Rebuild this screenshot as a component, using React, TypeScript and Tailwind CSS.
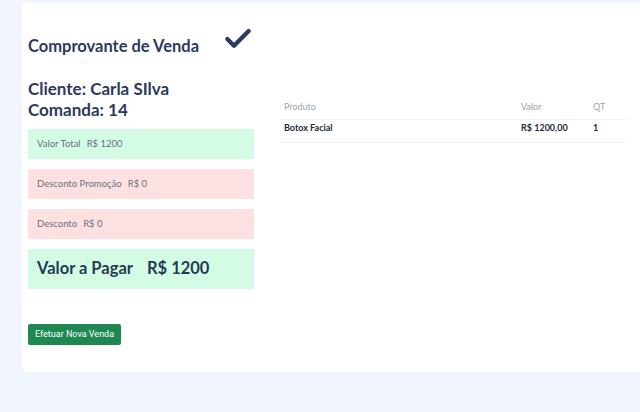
import { Check } from "lucide-react";

const font = { fontFamily: "Lato, 'Noto Sans', sans-serif" };

export default function App() {
    return (
        <div className="min-h-[412px] w-[640px] bg-[#f1f6fe] pt-[3px] pl-[22px]" style={font}>
            <div className="flex h-[369px] rounded-bl-md bg-white">
                <div className="flex w-[232px] flex-col pl-[6px] pt-[22px]">
                    <div className="flex items-start justify-between">
                        <h1 className="pt-[9px] pb-[2px] text-[16.5px] font-bold text-[#2d3a5e]">Comprovante de Venda</h1>
                        <Check className="-mt-[2px] h-[32px] w-[32px] text-[#2d3a5e]" strokeWidth={3.2} />
                    </div>
                    <div className="mt-[17px] text-[17px] font-bold leading-[21px] text-[#2d3a5e]">
                        <p>Cliente: Carla SIlva</p>
                        <p>Comanda: 14</p>
                    </div>
                    <div className="mt-[9px] flex flex-col gap-[10px] text-[9.5px] text-[#6b7280]">
                        <div className="flex h-[30px] items-center gap-[6px] bg-[#d4fce5] px-[9px]">
                            <span>Valor Total</span>
                            <span>R$ 1200</span>
                        </div>
                        <div className="flex h-[30px] items-center gap-[6px] bg-[#fde1e1] px-[9px]">
                            <span>Desconto Promoção</span>
                            <span>R$ 0</span>
                        </div>
                        <div className="flex h-[30px] items-center gap-[6px] bg-[#fde1e1] px-[9px]">
                            <span>Desconto</span>
                            <span>R$ 0</span>
                        </div>
                        <div className="flex h-[40px] items-center gap-[14px] bg-[#d4fce5] px-[9px] text-[16.5px] font-bold text-[#243b53]">
                            <span>Valor a Pagar</span>
                            <span>R$ 1200</span>
                        </div>
                    </div>
                    <div className="mt-[30px]">
                        <button
                            className="rounded-[2px] bg-[#1e8752] px-[7px] py-[5px] text-[9px] leading-[11px] text-white"
                            style={{ fontFamily: "Roboto, sans-serif" }}
                        >
                            Efetuar Nova Venda
                        </button>
                    </div>
                </div>
                <div className="flex-1 pl-[26px] pr-[14px] pt-[97px]">
                    <table className="w-full text-[9px]">
                        <thead>
                            <tr className="border-b border-[#f1f3f6] text-left text-[#9ca3af]">
                                <th className="pb-[5px] pl-[4px] font-normal">Produto</th>
                                <th className="w-[72px] pb-[5px] font-normal">Valor</th>
                                <th className="w-[33px] pb-[5px] font-normal">QT</th>
                            </tr>
                        </thead>
                        <tbody>
                            <tr className="border-b border-[#f1f3f6] font-bold text-[#1f2937]">
                                <td className="pt-[1px] pb-[8px] pl-[4px]">Botox Facial</td>
                                <td className="pt-[1px] pb-[8px]">R$ 1200,00</td>
                                <td className="pt-[1px] pb-[8px]">1</td>
                            </tr>
                        </tbody>
                    </table>
                </div>
            </div>
        </div>
    );
}
